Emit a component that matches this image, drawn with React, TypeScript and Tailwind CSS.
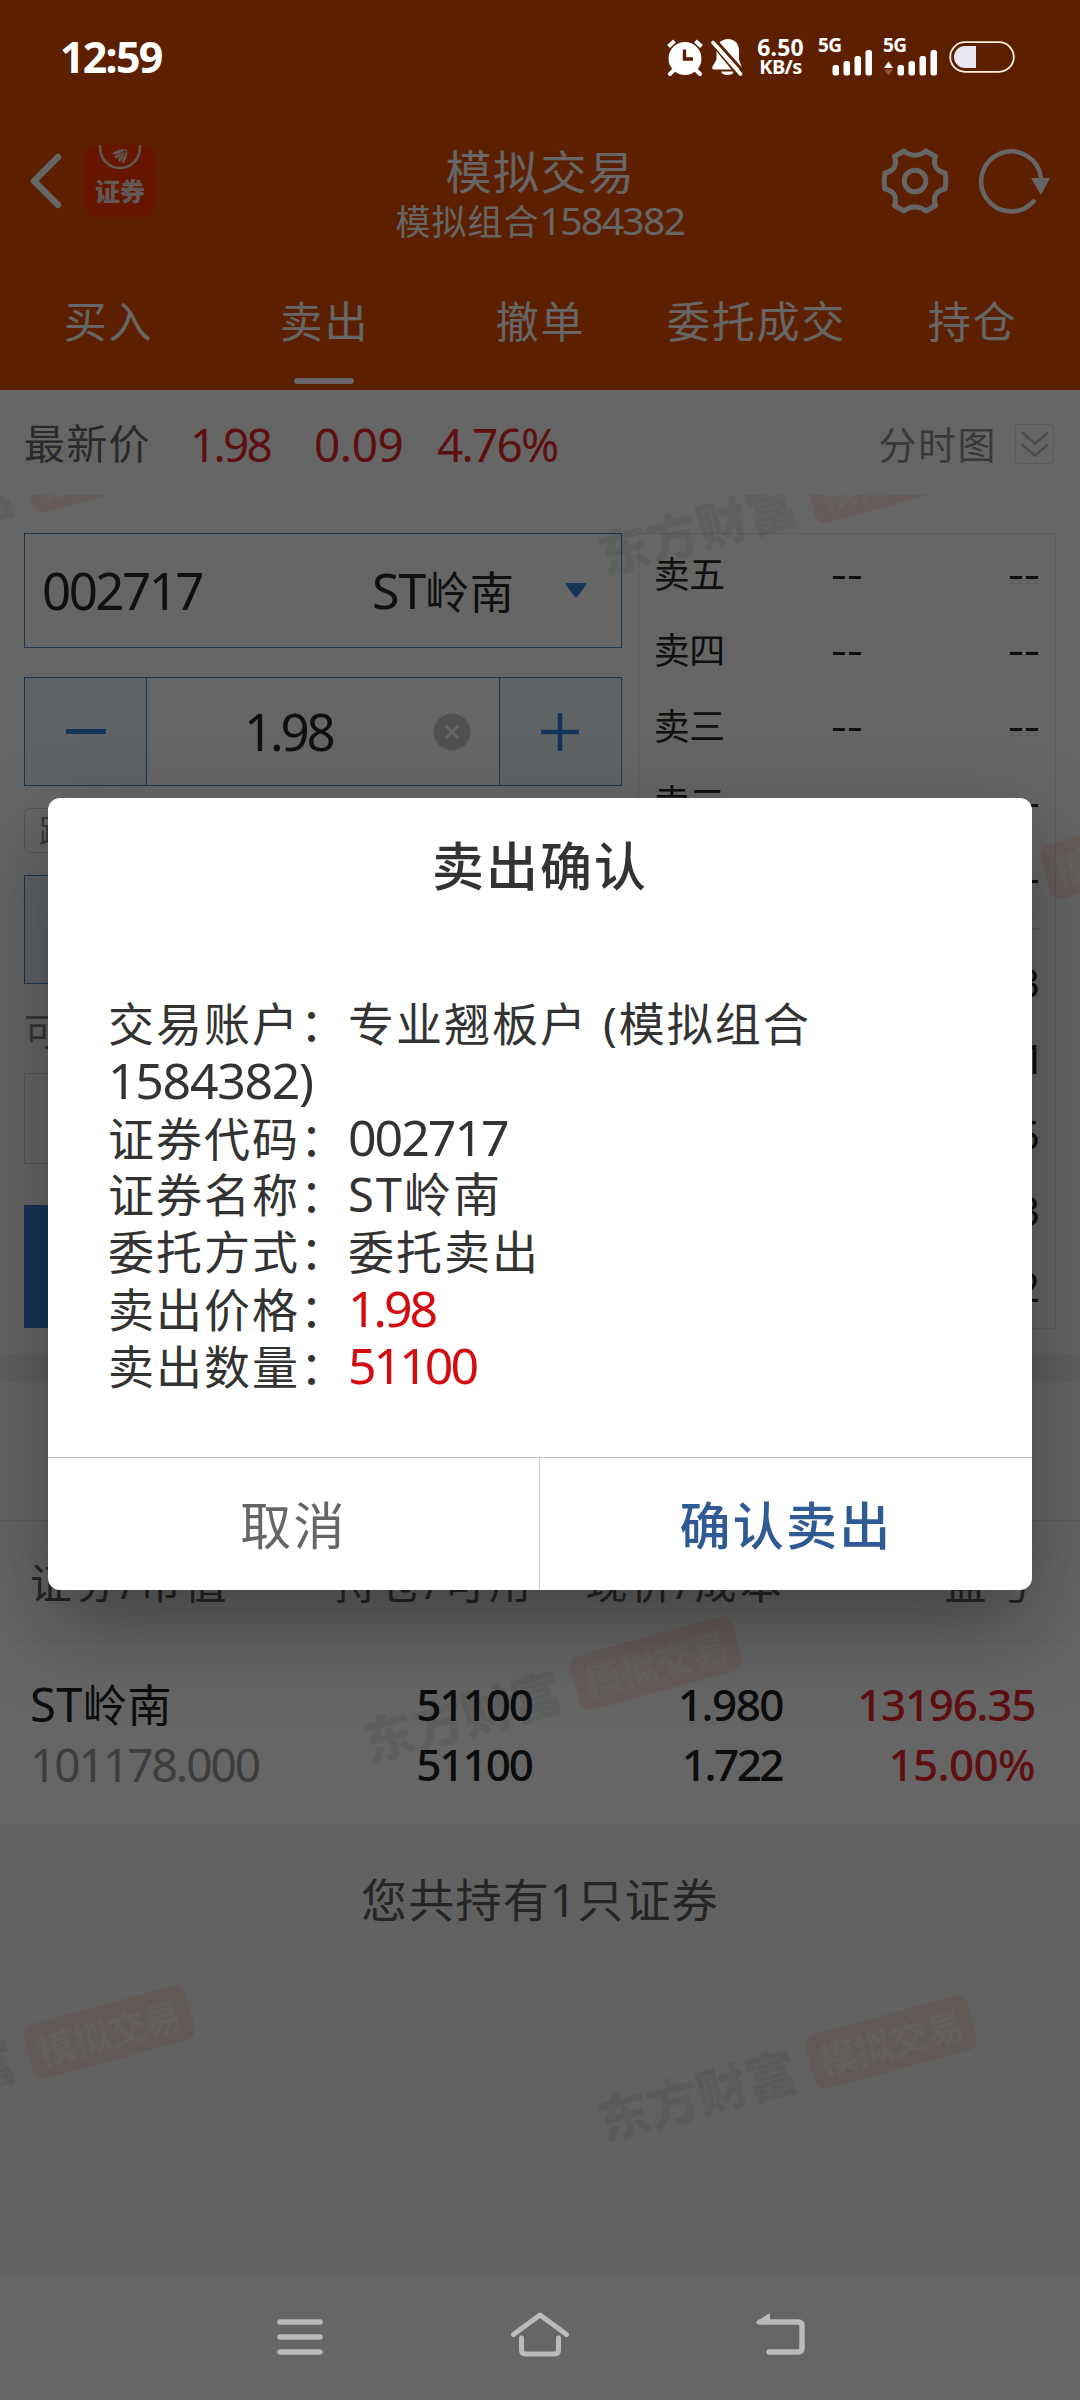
import type { ReactNode } from 'react';

const DIALOG_ROWS = [
  { label: '证券代码：', value: '002717', className: 'text-[50px] tracking-[-2px]' },
  { label: '证券名称：', value: 'ST岭南', className: 'text-[47px] tracking-[2px]' },
  { label: '委托方式：', value: '委托卖出', className: '' },
  { label: '卖出价格：', value: '1.98', className: 'text-[50px] tracking-[-3px] text-[#d40b0f]' },
  { label: '卖出数量：', value: '51100', className: 'text-[50px] tracking-[-3px] text-[#d40b0f]' },
];

const ASKS = ['卖五', '卖四', '卖三', '卖二', '卖一'];

const BIDS = [
  { label: '买一', price: '1.98', volume: '1283', nudge: '' },
  { label: '买二', price: '1.97', volume: '641', nudge: '-mr-[5px]' },
  { label: '买三', price: '1.96', volume: '1765', nudge: '' },
  { label: '买四', price: '1.95', volume: '2013', nudge: '' },
  { label: '买五', price: '1.94', volume: '902', nudge: '' },
];

const TABS = ['买入', '卖出', '撤单', '委托成交', '持仓'];

function AlarmIcon() {
  return (
    <svg className="h-[38px] w-[38px]" viewBox="0 0 38 38">
      <circle cx="19" cy="20.500" r="16.500" fill="#fff" />
      <path d="M2.500 8.500 8.500 3M35.500 8.500 29.500 3" stroke="#fff" strokeWidth="4" />
      <path d="M7 33 4 36M31 33l3 3" stroke="#fff" strokeWidth="4" strokeLinecap="round" />
      <path d="M18.500 11.500v9.500h8.500" fill="none" stroke="#5c2001" strokeWidth="3.400" />
    </svg>
  );
}

function BellOffIcon() {
  return (
    <svg className="h-[38px] w-[32px]" viewBox="0 0 32 38">
      <path
        d="M17 1C10 1 5.500 6 5.500 12.500v9L1.500 28.500c-.8 1.500 0 3 1.500 3h26c1.500 0 2.300-1.500 1.500-3l-2.500-7v-9C28 6 24 1 17 1Z"
        fill="#fff"
      />
      <path d="M10 33.500h13c-1.500 4.700-11.500 4.700-13 0Z" fill="#fff" />
      <path d="M3.500 1 33 34" stroke="#5c2001" strokeWidth="3" />
      <path d="M1 6 27 38" stroke="#5c2001" strokeWidth="2" />
      <path d="M2 4.500 29.500 36" stroke="#fff" strokeWidth="3.600" strokeLinecap="round" />
    </svg>
  );
}

function Signal({ arrows = false }: { arrows?: boolean }) {
  return (
    <div className="relative h-[38px] w-[56px]">
      <span className="absolute left-0 top-0 text-[19px] font-bold leading-[15px] tracking-[-0.5px]">5G</span>
      <svg className="absolute bottom-0 left-0 h-[38px] w-[56px]" viewBox="0 0 56 38" fill="#fff">
        <rect x="14.500" y="27" width="6.500" height="10.500" rx="2.500" />
        <rect x="25.500" y="23" width="6.500" height="14.500" rx="2.500" />
        <rect x="36.500" y="18" width="6.500" height="19.500" rx="2.500" />
        <rect x="47.500" y="12" width="6.500" height="25.500" rx="2.500" />
        {arrows && (
          <>
            <path d="M1 30 5.500 23.500l4.500 6.500Z" />
            <path d="M1 31.500h9l-4.500 6Z" fill="#92563c" />
          </>
        )}
      </svg>
    </div>
  );
}

function StatusBar() {
  return (
    <div className="flex h-[114px] items-center justify-between pl-[60px] pr-[65px] text-white">
      <span className="pb-[2px] text-[43px] font-bold leading-none tracking-[-1.8px]">12:59</span>
      <div className="flex items-center">
        <AlarmIcon />
        <div className="w-[7px]" />
        <BellOffIcon />
        <div className="ml-[13px] flex w-[49px] flex-col items-center whitespace-nowrap pb-[1px] font-bold">
          <span className="text-[23px] leading-[20px] tracking-[0.2px]">6.50</span>
          <span className="text-[20px] leading-[20px] tracking-[-0.6px]">KB/s</span>
        </div>
        <div className="w-[13px]" />
        <Signal />
        <div className="w-[9px]" />
        <Signal arrows />
        <svg className="ml-[10px] h-[32px] w-[66px]" viewBox="0 0 66 32">
          <rect x="1.200" y="1.200" width="63.600" height="29.600" rx="14.800" fill="none" stroke="#fdeee0" strokeWidth="1.800" />
          <path d="M27 5H16a11 11 0 0 0 0 22h11Z" fill="#e8e6f0" />
        </svg>
      </div>
    </div>
  );
}

function AppLogo() {
  return (
    <div className="relative flex h-[72px] w-[72px] flex-col items-center overflow-hidden rounded-[14px] bg-[#ff3500]">
      <svg className="h-[28px] w-[72px]" viewBox="0 0 72 28" fill="none">
        <path d="M16 0v3a20 20 0 0 0 40 0V0" stroke="#f7dcd4" strokeWidth="2.500" />
        <path d="M28 9c4-4 10-6 15-4 1 5-1 10-4 14-1-2-1-3-1-4l-3 2c-1-2-1-3 0-5l-4 1c0-2 0-3 1-4Z" fill="#f7dcd4" />
        <path d="M32 10l9-4M34 13l8-7M37 16l5-9" stroke="#ff3500" strokeWidth="0.800" />
      </svg>
      <span className="mt-[4px] text-[25px] font-black leading-[28px] text-[#f7dcd4]">证券</span>
    </div>
  );
}

function TitleBar() {
  return (
    <div className="flex h-[134px] items-center">
      <div className="flex w-[340px] items-center pl-[28px]">
        <svg className="h-[60px] w-[36px]" viewBox="0 0 36 60" fill="none">
          <path d="M30 6 6 30l24 24" stroke="#fff" strokeWidth="6.500" strokeLinecap="round" strokeLinejoin="round" />
        </svg>
        <div className="w-[20px]" />
        <AppLogo />
      </div>
      <div className="flex flex-1 flex-col items-center whitespace-nowrap pt-[28px]">
        <div className="pl-[1px] text-[46px] leading-[52px] tracking-[1.500px]">模拟交易</div>
        <div className="text-[35px] leading-[46px] tracking-[1px]">
          模拟组合<span className="text-[39px] tracking-[-1.600px]">1584382</span>
        </div>
      </div>
      <div className="flex w-[340px] items-center justify-end gap-[28px] pr-[29px]">
        <svg className="h-[68px] w-[68px]" viewBox="-34 -34 68 68" fill="none" stroke="#fff" strokeWidth="5" strokeLinejoin="round">
          <path d="M-11-30C-5-24.500 5-24.500 11-30L20.500-24.500C17.500-16 21-10 30-8Q31.500 0 30 8C21 10 17.500 16 20.500 24.500L11 30C5 24.500-5 24.500-11 30L-20.500 24.500C-17.500 16-21 10-30 8Q-31.500 0-30-8C-21-10-17.500-16-20.500-24.500Z" />
          <circle r="10.800" />
        </svg>
        <svg className="h-[68px] w-[74px]" viewBox="-34 -34 74 68" fill="none">
          <path d="M22.500 20.500A30 30 0 1 1 30-3" stroke="#fff" strokeWidth="4.500" strokeLinecap="round" />
          <path d="M20-3h19L30 14Z" fill="#fff" />
        </svg>
      </div>
    </div>
  );
}

function Tabs() {
  return (
    <div className="grid h-[142px] grid-cols-5 text-[43px] leading-[60px] tracking-[1.800px]">
      {TABS.map((tab) => (
        <div key={tab} className="flex flex-col items-center whitespace-nowrap pt-[44px]">
          <span className="pl-[1px]">{tab}</span>
          {tab === '卖出' && <span className="mt-[26px] h-[6px] w-[60px] rounded-full bg-white" />}
        </div>
      ))}
    </div>
  );
}

function QuoteBar() {
  return (
    <div className="flex h-[105px] items-center whitespace-nowrap px-[24px] pt-[2px] text-[46px] leading-none text-[#ea2828]">
      <span className="w-[166px] text-[41px] tracking-[1.200px] text-[#6a6a6a]">最新价</span>
      <span className="w-[124px] tracking-[-2.800px]">1.98</span>
      <span className="w-[123px] tracking-[-0.500px]">0.09</span>
      <span className="tracking-[-1.800px]">4.76%</span>
      <span className="ml-auto text-[38px] tracking-[1.500px] text-[#8f8f8f]">分时图</span>
      <div className="ml-[18px] mr-[2px] flex h-[40px] w-[39px] items-center justify-center rounded-[3px] border border-[#e0e0e0]">
        <svg className="h-[28px] w-[30px]" viewBox="0 0 30 28" fill="none" stroke="#bdbdbd" strokeWidth="2.500">
          <path d="M2 2.500 15 13.500 28 2.500M2 14.500 15 25.500 28 14.500" />
        </svg>
      </div>
    </div>
  );
}

function Stepper({ children }: { children?: ReactNode }) {
  return (
    <div className="grid h-[109px] grid-cols-[122px_1fr_122px] border border-[#4686c4]">
      <div className="flex items-center justify-center border-r border-[#4686c4] bg-[#f0f7fe]">
        <span className="h-[5px] w-[40px] bg-[#3583e4]" />
      </div>
      <div className="flex items-center">{children}</div>
      <div className="flex items-center justify-center border-l border-[#4686c4] bg-[#f0f7fe]">
        <svg className="h-[38px] w-[38px]" viewBox="0 0 38 38" stroke="#3583e4" strokeWidth="4.500">
          <path d="M0 19h38M19 0v38" />
        </svg>
      </div>
    </div>
  );
}

function OrderForm() {
  return (
    <div className="flex w-[599px] flex-col whitespace-nowrap">
      <div className="flex h-[115px] items-center border border-[#4686c4] pl-[17px] text-[#282828]">
        <span className="w-[330px] text-[51px] leading-none tracking-[-2.500px]">002717</span>
        <span className="pb-[2px] text-[44px] leading-none tracking-[0.500px]">
          <span className="text-[50px] tracking-[-1px]">ST</span>岭南
        </span>
        <svg className="ml-auto mr-[34px] h-[15px] w-[22px]" viewBox="0 0 22 15">
          <path d="M1 0h20q1 1 0 2L12 14q-1 1-2 0L1 2Q0 1 1 0Z" fill="#3583e4" />
        </svg>
      </div>
      <div className="mt-[29px]">
        <Stepper>
          <span className="pl-[97px] text-[51px] leading-none tracking-[-3.200px] text-[#282828]">1.98</span>
          <svg className="ml-auto mr-[28px] h-[38px] w-[38px]" viewBox="0 0 38 38">
            <circle cx="19" cy="19" r="18.500" fill="#c8c8c8" />
            <path d="M12.500 12.500l13 13M25.500 12.500l-13 13" stroke="#fff" strokeWidth="3" />
          </svg>
        </Stepper>
      </div>
      <div className="mt-[22px] flex h-[45px] items-center justify-between">
        <div className="flex h-full items-center rounded-[6px] border border-[#d5d5d5] px-[14px] text-[32px] leading-none text-[#888]">跌停1.80</div>
        <div className="flex h-full items-center rounded-[6px] border border-[#d5d5d5] px-[14px] text-[32px] leading-none text-[#888]">涨停1.98</div>
      </div>
      <div className="mt-[22px]">
        <Stepper />
      </div>
      <div className="flex h-[89px] items-center pt-[2px] text-[38px] leading-none text-[#888]">可卖51100股</div>
      <div className="grid h-[91px] grid-cols-4 border border-[#d5d5d5]">
        {['全仓', '1/2', '1/3', '1/4'].map((label) => (
          <div key={label} className="flex items-center justify-center border-r border-[#d5d5d5] text-[36px] text-[#555] last:border-r-0">
            {label}
          </div>
        ))}
      </div>
      <div className="mt-[41px] flex h-[123px] items-center justify-center bg-[#3a80e2] text-[46px] text-white">卖出</div>
    </div>
  );
}

function BookRow({ label, price, volume, nudge }: { label: string; price: string; volume: string; nudge: string }) {
  return (
    <div className="flex h-[76px] items-center justify-between text-[36px] leading-none text-[#282828]">
      <span className="w-[104px] tracking-[-0.500px]">{label}</span>
      <span className="w-[106px] text-right text-[40px]">{price}</span>
      <span className={`flex-1 text-right text-[40px] ${nudge}`}>{volume}</span>
    </div>
  );
}

function Dashes() {
  return (
    <span className="flex items-center gap-[4px]">
      <span className="h-[3px] w-[12px] bg-[#282828]" />
      <span className="h-[3px] w-[12px] bg-[#282828]" />
    </span>
  );
}

function OrderBook() {
  return (
    <div className="flex h-[796px] w-[419px] flex-col border border-[#e6e6e6] px-[15px] pt-[5px]">
      {ASKS.map((label) => (
        <div key={label} className="flex h-[76px] items-center pr-[2px] text-[36px] leading-none text-[#282828]">
          <span className="w-[179px] pb-[4px] tracking-[-0.500px]">{label}</span>
          <Dashes />
          <span className="ml-auto">
            <Dashes />
          </span>
        </div>
      ))}
      <div className="mb-[15px] mt-[9px] h-[2px] bg-[#dedede]" />
      {BIDS.map((row) => (
        <BookRow key={row.label} {...row} />
      ))}
    </div>
  );
}

function Holdings() {
  return (
    <div className="flex flex-col whitespace-nowrap">
      <div className="h-[138px] border-b border-[#e8e8e8]" />
      <div className="grid h-[122px] grid-cols-[200px_304px_251px_250px] items-center border-b border-[#f2f2f2] pl-[30px] pt-[3px] text-[42px] leading-none tracking-[3.2px] text-[#5c5c5c]">
        <span>证券/市值</span>
        <span className="text-right">持仓/可用</span>
        <span className="text-right">现价/成本</span>
        <span className="text-right">盈亏</span>
      </div>
      <div className="flex h-[180px] flex-col pt-[31px] text-[44px] font-medium leading-[60px] text-[#222]">
        <div className="grid h-[60px] grid-cols-[200px_302px_251px_252px] pl-[30px]">
          <span className="text-[44px] font-normal tracking-[0.500px]">
            <span className="text-[47px]">ST</span>岭南
          </span>
          <span className="text-right tracking-[-2px]">51100</span>
          <span className="text-right tracking-[-1.500px]">1.980</span>
          <span className="text-right tracking-[-1.300px] text-[#ea2828]">13196.35</span>
        </div>
        <div className="grid grid-cols-[200px_302px_250px_253px] pl-[30px]">
          <span className="text-[46px] font-normal tracking-[-2px] text-[#999]">101178.000</span>
          <span className="text-right tracking-[-2px]">51100</span>
          <span className="text-right tracking-[-2.500px]">1.722</span>
          <span className="text-right tracking-[-0.600px] text-[#ea2828]">15.00%</span>
        </div>
      </div>
    </div>
  );
}

function Watermark({ className }: { className: string }) {
  return (
    <div className={`absolute flex h-[60px] w-[388px] -rotate-[15.3deg] items-center gap-[14px] whitespace-nowrap ${className}`}>
      <span className="w-[205px] text-[51px] font-black leading-none text-[#203030]/[0.085]">东方财富</span>
      <span className="flex h-[56px] w-[168px] items-center justify-center rounded-[11px] bg-[#ff6a3c]/15 text-[37px] font-bold leading-none text-white/50">
        模拟交易
      </span>
    </div>
  );
}

function Watermarks() {
  return (
    <div className="pointer-events-none absolute inset-x-0 bottom-[127px] top-[495px] overflow-hidden">
      <Watermark className="-left-[190px] -top-[30px]" />
      <Watermark className="left-[592px] -top-[20px]" />
      <Watermark className="left-[827px] top-[356px]" />
      <Watermark className="left-[357px] top-[1167px]" />
      <Watermark className="-left-[190px] top-[1536px]" />
      <Watermark className="left-[592px] top-[1546px]" />
    </div>
  );
}

function NavBar() {
  return (
    <div className="flex h-[126px] items-center justify-center gap-[182px]">
      <svg className="h-[50px] w-[56px]" viewBox="0 0 56 50" stroke="#bbb" strokeWidth="5.500" strokeLinecap="round">
        <path d="M8 10h40M8 25h40M8 40h40" />
      </svg>
      <svg className="h-[50px] w-[60px]" viewBox="0 0 60 50" fill="none" stroke="#bbb" strokeWidth="5" strokeLinecap="round" strokeLinejoin="round">
        <path d="M3.500 22.500 30 3l26.500 19.500" />
        <path d="M11.500 26v12q0 4 4 4h29q4 0 4-4V26" />
      </svg>
      <svg className="h-[50px] w-[56px]" viewBox="0 0 56 50" fill="none" stroke="#bbb" strokeWidth="5.500" strokeLinecap="round" strokeLinejoin="round">
        <path d="M8 10h38q4 0 4 4v22q0 4-4 4H17" />
        <path d="M5 10.500 17 2.500V11Z" fill="#bbb" strokeWidth="2" />
      </svg>
    </div>
  );
}

function ConfirmDialog() {
  return (
    <div className="flex h-[792px] w-[984px] flex-col overflow-hidden whitespace-nowrap rounded-[12px] bg-white text-[#333] shadow-[0_36px_90px_rgba(0,0,0,0.35)]">
      <h2 className="pt-[37px] text-center text-[52px] font-medium leading-[62px] tracking-[2px]">卖出确认</h2>
      <div className="flex-1 pl-[60px] pt-[98px] text-[46px] leading-[57px] tracking-[2px]">
        <div>
          交易账户：专业翘板户<span className="pl-[15px]">(</span>模拟组合
        </div>
        <div className="text-[50px] tracking-[-1.300px]">1584382)</div>
        {DIALOG_ROWS.map((row) => (
          <div key={row.label} className="h-[57px]">
            {row.label}
            <span className={row.className}>{row.value}</span>
          </div>
        ))}
      </div>
      <div className="grid h-[133px] grid-cols-2 border-t border-[#c4c4c4] text-[51px] leading-none tracking-[2.200px]">
        <button className="border-r border-[#ccc] pt-[3px] text-[#666]">取消</button>
        <button className="pt-[3px] font-medium text-[#2f5a93]">确认卖出</button>
      </div>
    </div>
  );
}

export default function App() {
  return (
    <div className="relative h-[2400px] w-[1080px] overflow-hidden bg-white font-['Noto_Sans','Noto_Sans_CJK_SC',sans-serif]">
      <header className="h-[390px] bg-[#e65003] pt-[114px] text-white">
        <TitleBar />
        <Tabs />
      </header>
      <QuoteBar />
      <div className="flex gap-[16px] px-[24px] pb-[24px] pt-[38px]">
        <OrderForm />
        <OrderBook />
      </div>
      <div className="h-[30px] bg-[#f0f0f0]" />
      <Holdings />
      <div className="h-[451px] bg-[#f5f5f5] pt-[46px] text-center text-[46px] leading-[60px] tracking-[1.200px] text-[#5c5c5c]">
        您共持有1只证券
      </div>
      <Watermarks />

      {/* Modal layer: system bars stay bright above the scrim */}
      <div className="absolute inset-0 flex flex-col bg-black/60">
        <StatusBar />
        <div className="flex flex-1 justify-center pt-[684px]">
          <ConfirmDialog />
        </div>
        <NavBar />
      </div>
    </div>
  );
}
